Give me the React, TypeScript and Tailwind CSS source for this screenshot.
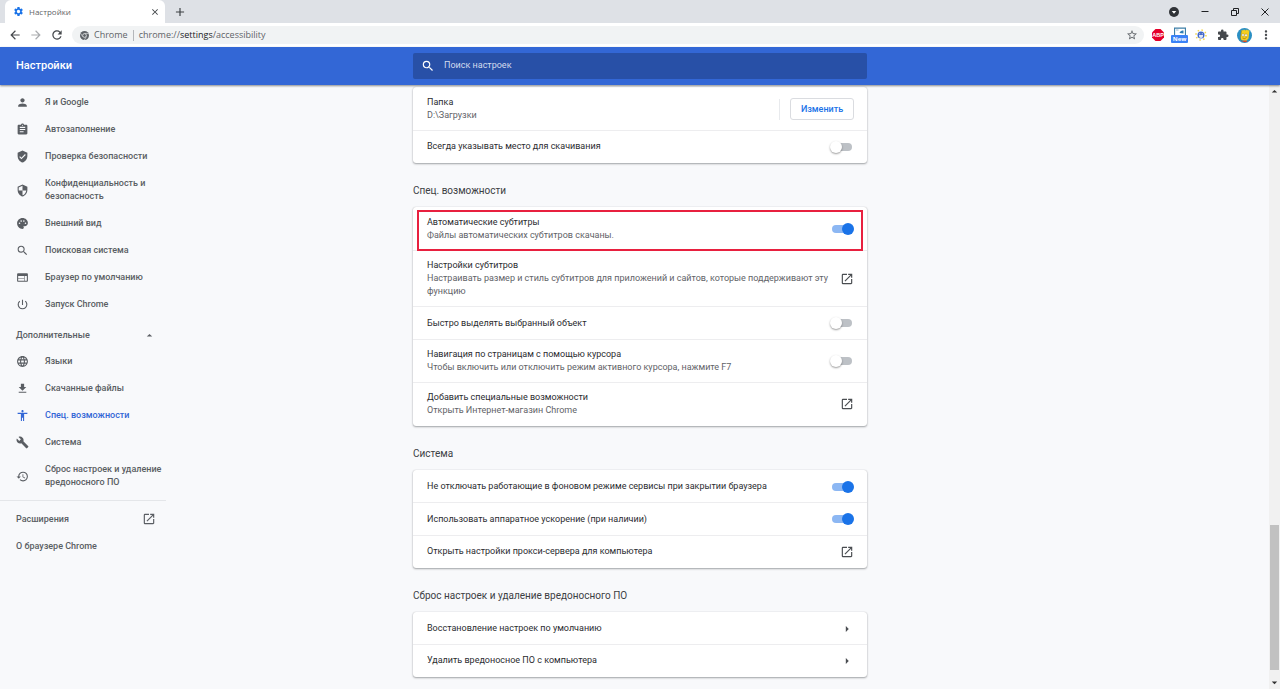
import { useState, type ReactNode } from "react";
import type { IconType } from "react-icons";
import {
  MdAccessibility,
  MdAdd,
  MdArrowBack,
  MdArrowDropDown,
  MdArrowDropUp,
  MdArrowForward,
  MdArrowRight,
  MdAssignment,
  MdBuild,
  MdClose,
  MdExtension,
  MdFileDownload,
  MdLanguage,
  MdLaunch,
  MdMoreVert,
  MdPalette,
  MdPerson,
  MdPowerSettingsNew,
  MdRefresh,
  MdRestore,
  MdSearch,
  MdSecurity,
  MdSettings,
  MdStarBorder,
  MdVerifiedUser,
  MdWeb,
} from "react-icons/md";

type NavItem = { label: string; icon: IconType; active?: boolean };

const mainNav: NavItem[] = [
  { label: "Я и Google", icon: MdPerson },
  { label: "Автозаполнение", icon: MdAssignment },
  { label: "Проверка безопасности", icon: MdVerifiedUser },
  { label: "Конфиденциальность и безопасность", icon: MdSecurity },
  { label: "Внешний вид", icon: MdPalette },
  { label: "Поисковая система", icon: MdSearch },
  { label: "Браузер по умолчанию", icon: MdWeb },
  { label: "Запуск Chrome", icon: MdPowerSettingsNew },
];

const advancedNav: NavItem[] = [
  { label: "Языки", icon: MdLanguage },
  { label: "Скачанные файлы", icon: MdFileDownload },
  { label: "Спец. возможности", icon: MdAccessibility, active: true },
  { label: "Система", icon: MdBuild },
  { label: "Сброс настроек и удаление вредоносного ПО", icon: MdRestore },
];

function AdblockIcon() {
  return (
    <svg viewBox="0 0 24 24" className="h-3 w-3">
      <path d="M7 0h10l7 7v10l-7 7H7l-7-7V7z" fill="#e4002b" />
      <text
        x="12"
        y="16"
        textAnchor="middle"
        fontSize="11"
        fontWeight="700"
        fill="#fff"
        className="font-['Liberation_Sans']"
      >
        ABP
      </text>
    </svg>
  );
}

function ScreenshotIcon() {
  return (
    <span className="flex flex-col items-center">
      <svg viewBox="0 0 24 16" className="h-2 w-3">
        <path d="M1 16V2h22v14" fill="#fff" stroke="#3c7fa8" strokeWidth="2.5" />
        <path d="M11 12c1-4 5-5 8-5v6z" fill="#2f7fb5" />
        <path d="M4 5h5v2H4z" fill="#8fb9d3" />
      </svg>
      <span className="rounded-[1px] bg-[#3b82f6] px-[2px] font-['Open_Sans'] text-[6px] leading-[8px] font-bold text-white">
        New
      </span>
    </span>
  );
}

function SunIcon() {
  return (
    <svg viewBox="0 0 24 24" className="h-3 w-3">
      <circle cx="12" cy="12" r="10" fill="none" stroke="#f2d54a" strokeWidth="3" strokeDasharray="3 4.8" />
      <circle cx="12" cy="12" r="7" fill="#4267c9" />
      <path d="M8 12h8v2a4 4 0 0 1-8 0z" fill="#dfe6f7" />
      <circle cx="9.5" cy="9.5" r="1" fill="#fff" />
      <circle cx="14.5" cy="9.5" r="1" fill="#fff" />
    </svg>
  );
}

function Avatar() {
  return (
    <svg viewBox="0 0 30 30" className="h-[15px] w-[15px]">
      <circle cx="15" cy="15" r="15" fill="#2a8fc4" />
      <path d="M9 4l3 1 2-2 3 2 3-2 2 2 3-1-2 17-5 5-9-2-2-5z" fill="#f6cf1d" />
      <path d="M9 5L7 19l-1 3 4 4" fill="none" stroke="#8d7414" strokeWidth="1" />
      <circle cx="12" cy="14" r="2.6" fill="#fff" stroke="#8d7414" strokeWidth=".8" />
      <circle cx="18" cy="14.5" r="2.6" fill="#fff" stroke="#8d7414" strokeWidth=".8" />
      <path d="M11 20q5 3 8-1" fill="none" stroke="#8d5a14" strokeWidth="1.2" />
      <path d="M9 26l9-1 3 2q-6 3-12-1z" fill="#d9472b" />
    </svg>
  );
}

function ChromeIcon() {
  return (
    <svg viewBox="0 0 24 24" className="h-[9px] w-[9px]">
      <circle cx="12" cy="12" r="12" fill="#5f6368" />
      <path d="M12 6.5h11M7 15L1.5 6M17 15l-5.5 9" stroke="#f1f3f4" strokeWidth="1.5" />
      <circle cx="12" cy="12" r="5" fill="#5f6368" stroke="#f1f3f4" strokeWidth="2" />
    </svg>
  );
}

function TabStrip() {
  return (
    <div className="flex h-[23px] items-center bg-[#dee1e6] pr-[11px] pl-[5px] text-[#3c4043]">
      <div className="flex h-full w-40 items-center rounded-t-md bg-white pr-[5px] pl-2">
        <MdSettings className="h-[11px] w-[11px] text-[#1a73e8]" />
        <span className="ml-[5px] flex-1 font-['Open_Sans'] text-[8px] text-[#5f6368]">Настройки</span>
        <button aria-label="Закрыть вкладку">
          <MdClose className="h-[10px] w-[10px]" />
        </button>
      </div>
      <button aria-label="Новая вкладка" className="ml-2">
        <MdAdd className="h-[14px] w-[14px]" />
      </button>
      <div className="ml-auto flex w-[100px] items-center justify-between text-[#202124]">
        <button aria-label="Поиск вкладок">
          <svg viewBox="0 0 20 20" className="h-[10px] w-[10px]">
            <circle cx="10" cy="10" r="10" fill="#303338" />
            <path d="M5.5 8h9L10 13.5z" fill="#fff" />
          </svg>
        </button>
        <button aria-label="Свернуть">
          <svg viewBox="0 0 8 8" className="h-2 w-2">
            <path d="M.5 3.5h7" stroke="currentColor" />
          </svg>
        </button>
        <button aria-label="Восстановить">
          <svg viewBox="0 0 8 8" className="h-2 w-2" fill="none" stroke="currentColor">
            <path d="M.5 2.5h5v5h-5zM2.5 2V.5h5v5H6" />
          </svg>
        </button>
        <button aria-label="Закрыть">
          <svg viewBox="0 0 8 8" className="h-2 w-2">
            <path d="M.5.5l7 7M7.5.5l-7 7" stroke="currentColor" />
          </svg>
        </button>
      </div>
    </div>
  );
}

function Toolbar() {
  return (
    <div className="flex h-6 items-center bg-white text-[#46494d]">
      <div className="flex w-[72px] items-center justify-between pr-2 pl-2">
        <button aria-label="Назад">
          <MdArrowBack className="h-[14px] w-[14px]" />
        </button>
        <button aria-label="Вперед" className="text-[#a9abae]">
          <MdArrowForward className="h-[14px] w-[14px]" />
        </button>
        <button aria-label="Обновить">
          <MdRefresh className="h-[14px] w-[14px]" />
        </button>
      </div>
      <div className="flex h-[18px] flex-1 items-center rounded-full bg-[#f1f3f4] pr-[6px] pl-2 font-['Open_Sans'] text-[9px] text-[#5f6368]">
        <ChromeIcon />
        <span className="ml-[5px]">Chrome</span>
        <span className="mx-[5px] h-[11px] w-px bg-[#b4b7bb]" />
        <span className="flex-1">
          chrome://<span className="text-[#202124]">settings</span>/accessibility
        </span>
        <button aria-label="Добавить в закладки">
          <MdStarBorder className="h-3 w-3" />
        </button>
      </div>
      <div className="mx-[5px] flex w-[126px] items-center justify-between">
        <button aria-label="Adblock" className="flex w-[18px] justify-center">
          <AdblockIcon />
        </button>
        <button aria-label="Скриншот" className="flex w-[18px] justify-center">
          <ScreenshotIcon />
        </button>
        <button aria-label="Яркость" className="flex w-[18px] justify-center">
          <SunIcon />
        </button>
        <button aria-label="Расширения" className="flex w-[18px] justify-center">
          <MdExtension className="h-3 w-3" />
        </button>
        <button aria-label="Профиль" className="flex w-[18px] justify-center">
          <Avatar />
        </button>
        <button aria-label="Меню" className="flex w-[18px] justify-center">
          <MdMoreVert className="h-[14px] w-[14px]" />
        </button>
      </div>
    </div>
  );
}

function Header() {
  return (
    <header className="relative z-10 flex h-[38px] items-center bg-[#3367d6] text-white shadow-[0_1px_2px_rgba(0,0,0,0.45)]">
      <div className="flex-1">
        <h1 className="ml-4 pt-px text-[11px] font-medium">Настройки</h1>
      </div>
      <label className="flex h-[26px] w-[454px] items-center rounded-[2px] bg-[#2850a7] pl-2">
        <MdSearch className="h-[14px] w-[14px]" />
        <input
          type="search"
          aria-label="Поиск настроек"
          placeholder="Поиск настроек"
          className="ml-[9px] flex-1 bg-transparent text-[9px] outline-none placeholder:text-[#d4dcee]"
        />
      </label>
      <div className="flex-1" />
    </header>
  );
}

function NavLinks({ items }: { items: NavItem[] }) {
  return (
    <>
      {items.map(({ label, icon: Icon, active }) => (
        <a
          key={label}
          href="#"
          className={`flex items-center py-[7px] pr-1 pl-4 ${active ? "text-[#3367d6]" : ""}`}
        >
          <Icon className="h-[13px] w-[13px] shrink-0" />
          <span className="ml-4">{label}</span>
        </a>
      ))}
    </>
  );
}

function Sidebar() {
  const [open, setOpen] = useState(true);

  return (
    <nav className="w-[166px] pt-1 text-[9px] leading-[13px] font-medium text-[#5a5e63]">
      <NavLinks items={mainNav} />
      <button
        onClick={() => setOpen(!open)}
        className="mt-[5px] flex w-full items-center justify-between py-[6px] pr-[10px] pl-4"
      >
        Дополнительные
        <MdArrowDropUp className="h-[13px] w-[13px]" />
      </button>
      {open ? <NavLinks items={advancedNav} /> : null}
      <hr className="my-1 border-[#e4e6e9]" />
      <a href="#" className="flex items-center justify-between py-[7px] pr-[10px] pl-4">
        Расширения
        <MdLaunch className="h-[14px] w-[14px]" />
      </a>
      <a href="#" className="flex items-center py-[7px] pl-4">
        О браузере Chrome
      </a>
    </nav>
  );
}

function Card({ title, children }: { title?: string; children: ReactNode }) {
  return (
    <section>
      {title ? (
        <h2 className="flex h-11 items-center pt-[10px] text-[10px] text-[#3c4043]">{title}</h2>
      ) : null}
      <div className="divide-y divide-[#ededef] rounded-[3px] bg-white shadow-[0_1px_2px_rgba(60,64,67,0.45),0_0_1px_rgba(60,64,67,0.3)]">
        {children}
      </div>
    </section>
  );
}

type RowProps = {
  label: string;
  sub?: string;
  highlighted?: boolean;
  children: ReactNode;
};

function Row({ label, sub, highlighted, children }: RowProps) {
  return (
    <div className="relative flex min-h-[33px] items-center justify-between py-2 pr-[13px] pl-[14px] first:pt-[9px] last:min-h-8 last:pb-[9px]">
      <div className="max-w-[404px] text-[9px] leading-[13px]">
        <div>{label}</div>
        {sub ? <div className="text-[#5f6368]">{sub}</div> : null}
      </div>
      {children}
      {highlighted ? (
        <div className="pointer-events-none absolute inset-x-1 top-[3px] -bottom-px z-10 border-2 border-[#e8203f]" />
      ) : null}
    </div>
  );
}

function ToggleRow({ on = false, ...row }: Omit<RowProps, "children"> & { on?: boolean }) {
  const [checked, setChecked] = useState(on);

  return (
    <Row {...row}>
      <input
        type="checkbox"
        role="switch"
        aria-label={row.label}
        checked={checked}
        onChange={() => setChecked(!checked)}
        className="relative mr-[2px] h-2 w-5 shrink-0 appearance-none rounded-full bg-[#bdc1c6] before:absolute before:top-[-2px] before:left-[-2px] before:h-3 before:w-3 before:rounded-full before:bg-white before:shadow-[0_1px_2px_rgba(0,0,0,0.4)] checked:bg-[#8cb7f3] checked:before:left-[10px] checked:before:bg-[#1a73e8] checked:before:shadow-none"
      />
    </Row>
  );
}

function LinkRow({ icon: Icon, ...row }: Omit<RowProps, "children"> & { icon: IconType }) {
  return (
    <Row {...row}>
      <a href="#" aria-label={row.label} className="text-[#4a4d51]">
        <Icon className="h-[14px] w-[14px]" />
      </a>
    </Row>
  );
}

function Settings() {
  return (
    <main className="w-[454px] pt-[2px] text-[#2b2c2f]">
      <Card>
        <div className="flex items-center pt-[9px] pr-[13px] pb-2 pl-[14px] text-[9px] leading-[13px]">
          <div className="flex-1">
            <div>Папка</div>
            <div className="text-[#5f6368]">D:\Загрузки</div>
          </div>
          <span className="mr-[10px] h-[21px] w-px bg-[#e8eaed]" />
          <button className="h-[22px] w-16 rounded-[3px] border border-[#dadce0] font-medium text-[#1a73e8]">
            Изменить
          </button>
        </div>
        <ToggleRow label="Всегда указывать место для скачивания" />
      </Card>

      <Card title="Спец. возможности">
        <ToggleRow
          label="Автоматические субтитры"
          sub="Файлы автоматических субтитров скачаны."
          highlighted
          on
        />
        <LinkRow
          label="Настройки субтитров"
          sub="Настраивать размер и стиль субтитров для приложений и сайтов, которые поддерживают эту функцию"
          icon={MdLaunch}
        />
        <ToggleRow label="Быстро выделять выбранный объект" />
        <ToggleRow
          label="Навигация по страницам с помощью курсора"
          sub="Чтобы включить или отключить режим активного курсора, нажмите F7"
        />
        <LinkRow
          label="Добавить специальные возможности"
          sub="Открыть Интернет-магазин Chrome"
          icon={MdLaunch}
        />
      </Card>

      <Card title="Система">
        <ToggleRow label="Не отключать работающие в фоновом режиме сервисы при закрытии браузера" on />
        <ToggleRow label="Использовать аппаратное ускорение (при наличии)" on />
        <LinkRow label="Открыть настройки прокси-сервера для компьютера" icon={MdLaunch} />
      </Card>

      <Card title="Сброс настроек и удаление вредоносного ПО">
        <LinkRow label="Восстановление настроек по умолчанию" icon={MdArrowRight} />
        <LinkRow label="Удалить вредоносное ПО с компьютера" icon={MdArrowRight} />
      </Card>
    </main>
  );
}

function Scrollbar() {
  return (
    <div className="flex w-[11px] flex-col items-center bg-[#f1f1f1] text-[#303030]">
      <MdArrowDropUp className="h-[13px] w-[13px]" />
      <div className="flex-[427]" />
      <div className="w-[9px] flex-[145] bg-[#c1c1c1]" />
      <div className="flex-[6]" />
      <MdArrowDropDown className="h-[13px] w-[13px]" />
    </div>
  );
}

function App() {
  return (
    <div className="flex h-screen flex-col bg-[#f8f9fb] font-['Roboto',sans-serif]">
      <TabStrip />
      <Toolbar />
      <Header />
      <div className="flex min-h-0 flex-1 overflow-hidden">
        <div className="flex-1">
          <Sidebar />
        </div>
        <Settings />
        <div className="flex flex-1 justify-end">
          <Scrollbar />
        </div>
      </div>
    </div>
  );
}

export default App;
